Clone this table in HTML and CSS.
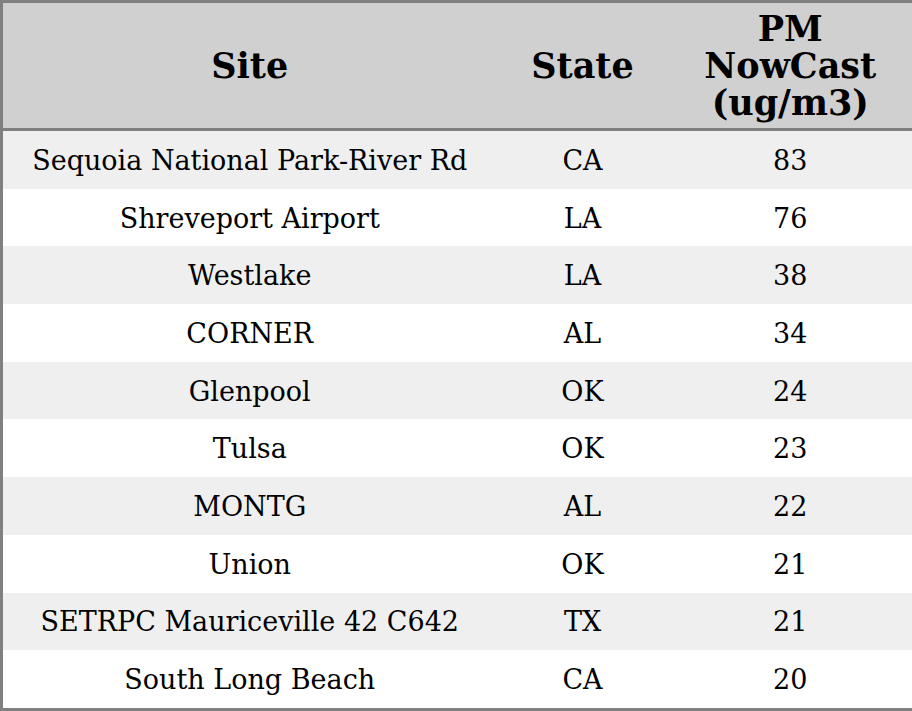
FILE: index.html
```html
<!DOCTYPE html>
<html>
<head>
<meta charset="utf-8">
<link rel="stylesheet" href="styles.css">
</head>
<body>
<table class="grid">
  <colgroup>
    <col class="c-site">
    <col class="c-state">
    <col class="c-pm">
  </colgroup>
  <thead>
    <tr><th>Site</th><th>State</th><th>PM<br>NowCast<br>(ug/m3)</th></tr>
  </thead>
  <tbody>
    <tr><td>Sequoia National Park-River Rd</td><td>CA</td><td>83</td></tr>
    <tr><td>Shreveport Airport</td><td>LA</td><td>76</td></tr>
    <tr><td>Westlake</td><td>LA</td><td>38</td></tr>
    <tr><td>CORNER</td><td>AL</td><td>34</td></tr>
    <tr><td>Glenpool</td><td>OK</td><td>24</td></tr>
    <tr><td>Tulsa</td><td>OK</td><td>23</td></tr>
    <tr><td>MONTG</td><td>AL</td><td>22</td></tr>
    <tr><td>Union</td><td>OK</td><td>21</td></tr>
    <tr><td>SETRPC Mauriceville 42 C642</td><td>TX</td><td>21</td></tr>
    <tr><td>South Long Beach</td><td>CA</td><td>20</td></tr>
  </tbody>
</table>
</body>
</html>
```
FILE: styles.css
```css
html, body {
  margin: 0;
  padding: 0;
  background: #ffffff;
}
.grid {
  width: 912px;
  height: 711px;
  border-collapse: collapse;
  table-layout: fixed;
  border: 3px solid #808080;
  font-family: "DejaVu Serif", serif;
  color: #000;
}
.c-site { width: 495px; }
.c-state { width: 172px; }
.c-pm { width: 245px; }
.grid th {
  background: #d0d0d0;
  font-size: 35px;
  font-weight: bold;
  line-height: 37px;
  height: 125px;
  padding: 0;
  text-align: center;
  vertical-align: middle;
  border-bottom: 3px solid #808080;
}
.grid td {
  font-size: 27px;
  line-height: 30px;
  height: 55.7px;
  padding: 2px 0 0;
  text-align: center;
  vertical-align: middle;
}
.grid tbody tr:nth-child(odd) td {
  background: #efefef;
}
```
